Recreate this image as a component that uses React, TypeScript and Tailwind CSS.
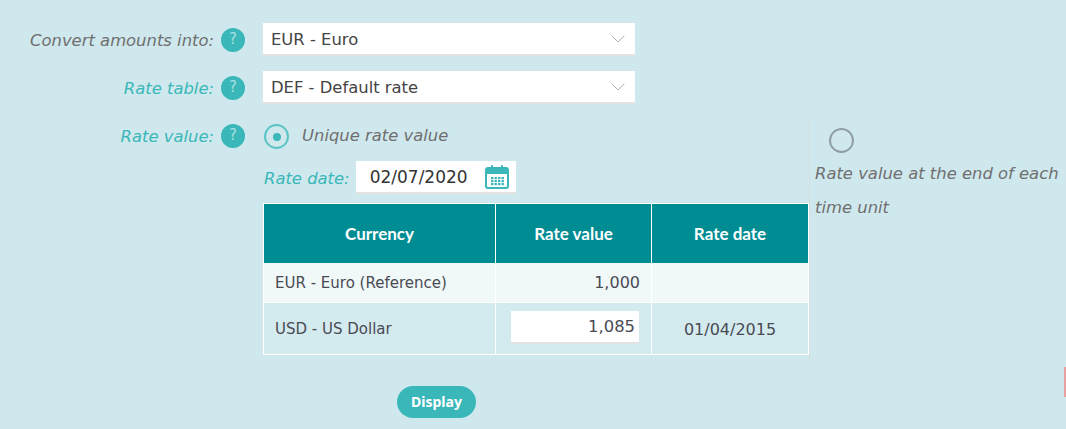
import { ChevronDown } from 'lucide-react'

const TEXT_FONT = "font-['DejaVu_Sans',Verdana,sans-serif]"

function HelpIcon() {
  return (
    <span className="flex h-6 w-6 shrink-0 items-center justify-center rounded-full bg-[#3ab7b9] pb-px text-[15px] text-[#a9dfe0]">
      ?
    </span>
  )
}

function Label({ text, muted }: { text: string; muted?: boolean }) {
  return (
    <span className={`w-[214px] shrink-0 pt-[3px] text-right text-[16.4px] italic ${muted ? 'text-[#6f6f6f]' : 'text-[#3ab7b9]'}`}>
      {text}
    </span>
  )
}

function SelectField({ value }: { value: string }) {
  return (
    <div className="ml-[18px] flex h-[33px] w-[372px] items-center justify-between border-b-2 border-[#e3e3e3] bg-white pl-2 pr-[5px] text-[16.4px] text-[#444]">
      <span className="pt-[3px]">{value}</span>
      <ChevronDown size={24} strokeWidth={1} className="text-[#aab4b8]" />
    </div>
  )
}

function Radio({ checked }: { checked?: boolean }) {
  return (
    <span
      className={`flex h-[25px] w-[25px] shrink-0 items-center justify-center rounded-full border-2 ${
        checked ? 'border-[#5cc4c6]' : 'border-[#8f9fa3]'
      }`}
    >
      {checked && <span className="h-2 w-2 rounded-full bg-[#3ab7b9]" />}
    </span>
  )
}

function RateTable() {
  return (
    <table className="mt-[9px] w-[546px] table-fixed border-collapse border border-white text-[15px] text-[#4a4a55]">
      <thead>
        <tr className="h-[59px] bg-[#008c93] font-['Lato',sans-serif] text-[17px] font-bold text-white">
          <th className="w-[232px] border-r border-white">Currency</th>
          <th className="w-[156px] border-r border-white">Rate value</th>
          <th>Rate date</th>
        </tr>
      </thead>
      <tbody>
        <tr className="h-10 border-b border-white bg-[#f0f9f8]">
          <td className="border-r border-white pl-[11px] pt-[2px]">EUR - Euro (Reference)</td>
          <td className="border-r border-white pr-[11px] pt-[2px] text-right text-base">1,000</td>
          <td />
        </tr>
        <tr className="h-[52px] bg-[#d3ebee]">
          <td className="border-r border-white pl-[11px] pt-[2px]">USD - US Dollar</td>
          <td className="border-r border-white">
            <div className="mb-[3px] ml-[15px] flex h-[33px] w-[128px] items-center justify-end border-b-2 border-[#e3e3e3] bg-white pr-1 pt-[3px] text-[16.4px]">
              1,085
            </div>
          </td>
          <td className="pt-[2px] text-center text-base">01/04/2015</td>
        </tr>
      </tbody>
    </table>
  )
}

function CalendarIcon() {
  return (
    <svg width="26" height="26" viewBox="0 0 26 26" className="shrink-0">
      <rect x="2" y="4" width="22" height="20" rx="2" fill="none" stroke="#3ab7b9" strokeWidth="2" />
      <rect x="2" y="4" width="22" height="6" fill="#3ab7b9" />
      <rect x="7" y="1" width="2" height="6" rx="1" fill="#3ab7b9" />
      <rect x="17" y="1" width="2" height="6" rx="1" fill="#3ab7b9" />
      {[7, 10.5, 14, 17.5].map((x) =>
        [13, 16, 19].map((y) => <rect key={`${x}-${y}`} x={x} y={y} width="2.4" height="2.2" fill="#3ab7b9" />)
      )}
    </svg>
  )
}

export default function App() {
  return (
    <div className={`relative h-[429px] w-[1066px] overflow-hidden bg-[#cfe8ed] pt-[23px] ${TEXT_FONT}`}>
      <div className="flex items-center">
        <Label text="Convert amounts into:" muted />
        <span className="ml-[7px]"><HelpIcon /></span>
        <SelectField value="EUR - Euro" />
      </div>
      <div className="mt-[15px] flex items-center">
        <Label text="Rate table:" />
        <span className="ml-[7px]"><HelpIcon /></span>
        <SelectField value="DEF - Default rate" />
      </div>
      <div className="mt-[14px] flex items-start">
        <div className="mt-[4px] flex items-center">
          <Label text="Rate value:" />
          <span className="ml-[7px]"><HelpIcon /></span>
        </div>
        <div className="ml-[18px] w-[547px] border-r border-[#d5dcde] pb-2">
          <div className="ml-px mt-[6px] flex items-center">
            <Radio checked />
            <span className="ml-[13px] text-[16.4px] italic text-[#6f6f6f]">Unique rate value</span>
          </div>
          <div className="mt-3 flex items-center">
            <span className="ml-px pt-[3px] text-[16.4px] italic text-[#3ab7b9]">Rate date:</span>
            <div className="ml-[6px] flex h-[33px] w-40 items-center justify-between border-b-2 border-[#e3e3e3] bg-white pl-[14px] pr-[6px] text-[17px] text-[#333]">
              <span className="pt-[3px]">02/07/2020</span>
              <CalendarIcon />
            </div>
          </div>
          <RateTable />
        </div>
        <div className="w-[256px] pl-[5px]">
          <div className="ml-[14px] mt-[10px]"><Radio /></div>
          <p className="mt-1 text-[16.4px] italic leading-[34px] text-[#6f6f6f]">Rate value at the end of each time unit</p>
        </div>
      </div>
      <button className="ml-[397px] mt-[23px] h-8 w-[79px] rounded-full bg-[#3ab7b9] font-['Noto_Sans',sans-serif] text-sm font-bold text-white">
        Display
      </button>
      <div className="absolute right-0 top-[367px] h-[30px] w-0.5 bg-[#e9a0a0]" />
    </div>
  )
}
